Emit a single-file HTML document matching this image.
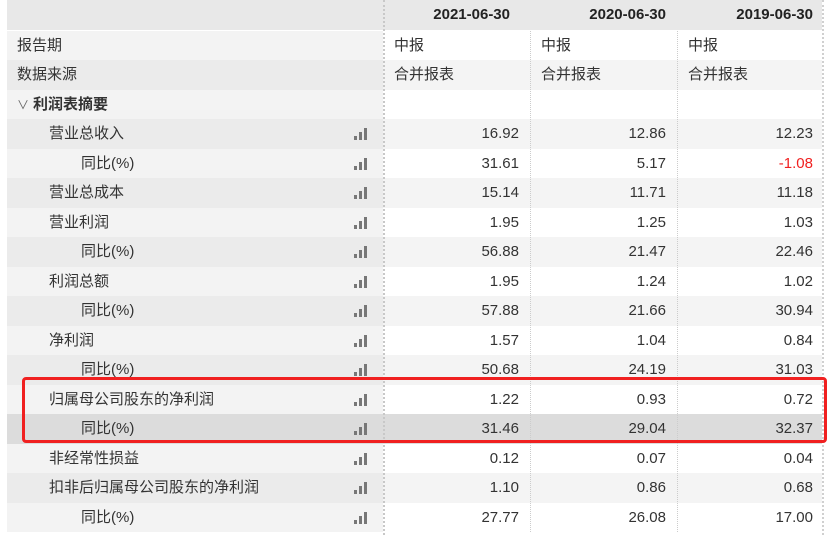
<!DOCTYPE html>
<html><head><meta charset="utf-8"><style>
body{margin:0;width:831px;height:535px;background:#fff;overflow:hidden;font-family:"Liberation Sans","Noto Sans CJK SC",sans-serif;font-size:15px;color:#333;position:relative}
.a{position:absolute}
.row{position:absolute;left:7px;width:815px;height:29.5px}
.l{position:absolute;left:0;width:376px;height:100%}
.c{position:absolute;top:0;height:100%;line-height:29.5px}
.bar{position:absolute;left:347px;top:9px;width:16px;height:12px}
.bar i{position:absolute;bottom:0;width:3px;background:#777}
.num{text-align:right}
.sep{position:absolute;top:0;bottom:6px;border-left:1px dotted #ccc}
</style></head><body>
<div class="a" style="left:7px;top:0;width:815px;height:30px;background:#e8e8e8"></div>
<div class="a" style="left:383px;top:0;width:147px;height:30px;line-height:30px;text-align:right;font-weight:bold;font-size:15px;color:#222;box-sizing:border-box;padding-right:20px">2021-06-30</div>
<div class="a" style="left:530px;top:0;width:147px;height:30px;line-height:30px;text-align:right;font-weight:bold;font-size:15px;color:#222;box-sizing:border-box;padding-right:11px">2020-06-30</div>
<div class="a" style="left:677px;top:0;width:147px;height:30px;line-height:30px;text-align:right;font-weight:bold;font-size:15px;color:#222;box-sizing:border-box;padding-right:11px">2019-06-30</div>
<div id="rows"></div>
<div class="sep" style="left:383px;border-left:2px dotted #c8c8c8;top:0;bottom:0"></div>
<div class="sep" style="left:530px;top:31px;bottom:3px"></div>
<div class="sep" style="left:677px;top:31px;bottom:3px"></div>
<div class="sep" style="left:822px;border-left:2px dotted #d0d0d0;top:0;bottom:0"></div>
<div class="a" style="left:22px;top:377px;width:799px;height:60px;border:3px solid #f02020;border-radius:4px"></div>
<script>
var d=[["报告期",0,"中报","中报","中报",0],["数据来源",0,"合并报表","合并报表","合并报表",0],["利润表摘要",-1,"","","",0],
["营业总收入",1,"16.92","12.86","12.23",1],["同比(%)",2,"31.61","5.17","-1.08",1],["营业总成本",1,"15.14","11.71","11.18",1],
["营业利润",1,"1.95","1.25","1.03",1],["同比(%)",2,"56.88","21.47","22.46",1],["利润总额",1,"1.95","1.24","1.02",1],
["同比(%)",2,"57.88","21.66","30.94",1],["净利润",1,"1.57","1.04","0.84",1],["同比(%)",2,"50.68","24.19","31.03",1],
["归属母公司股东的净利润",1,"1.22","0.93","0.72",1],["同比(%)",2,"31.46","29.04","32.37",1],["非经常性损益",1,"0.12","0.07","0.04",1],
["扣非后归属母公司股东的净利润",1,"1.10","0.86","0.68",1],["同比(%)",2,"27.77","26.08","17.00",1]];
var h="";
d.forEach(function(r,i){
 var top=30.5+i*29.5, odd=i%2==1, sel=i==13;
 var lb=sel?"#dcdcdc":(odd?"#ebebeb":"#f3f3f3"), rb=sel?"#dcdcdc":(odd?"#f4f4f4":"#fff");
 h+='<div class="row" style="top:'+top+'px;background:'+rb+'"><div class="l" style="background:'+lb+'"></div>';
 var x=r[1]==-1?10:(r[1]==0?10:(r[1]==1?42:74));
 if(r[1]==-1) h+='<div class="c" style="left:10px;font-weight:bold"><span style="font-weight:normal;color:#666;font-size:12px;margin-right:4px">∨</span>'+r[0]+'</div>';
 else h+='<div class="c" style="left:'+x+'px">'+r[0]+'</div>';
 if(r[5]) h+='<div class="bar"><i style="left:0;height:4px"></i><i style="left:5px;height:8px"></i><i style="left:10px;height:12px"></i></div>';
 if(r[5]){
  h+='<div class="c num" style="left:376px;width:136px">'+r[2]+'</div>';
  h+='<div class="c num" style="left:523px;width:136px">'+r[3]+'</div>';
  h+='<div class="c num" style="left:670px;width:136px'+(r[4][0]=="-"?';color:#f02020':'')+'">'+r[4]+'</div>';
 } else if(r[2]) {
  h+='<div class="c" style="left:387px">'+r[2]+'</div><div class="c" style="left:534px">'+r[3]+'</div><div class="c" style="left:681px">'+r[4]+'</div>';
 }
 h+='</div>';
});
document.getElementById("rows").innerHTML=h;
</script>
</body></html>
